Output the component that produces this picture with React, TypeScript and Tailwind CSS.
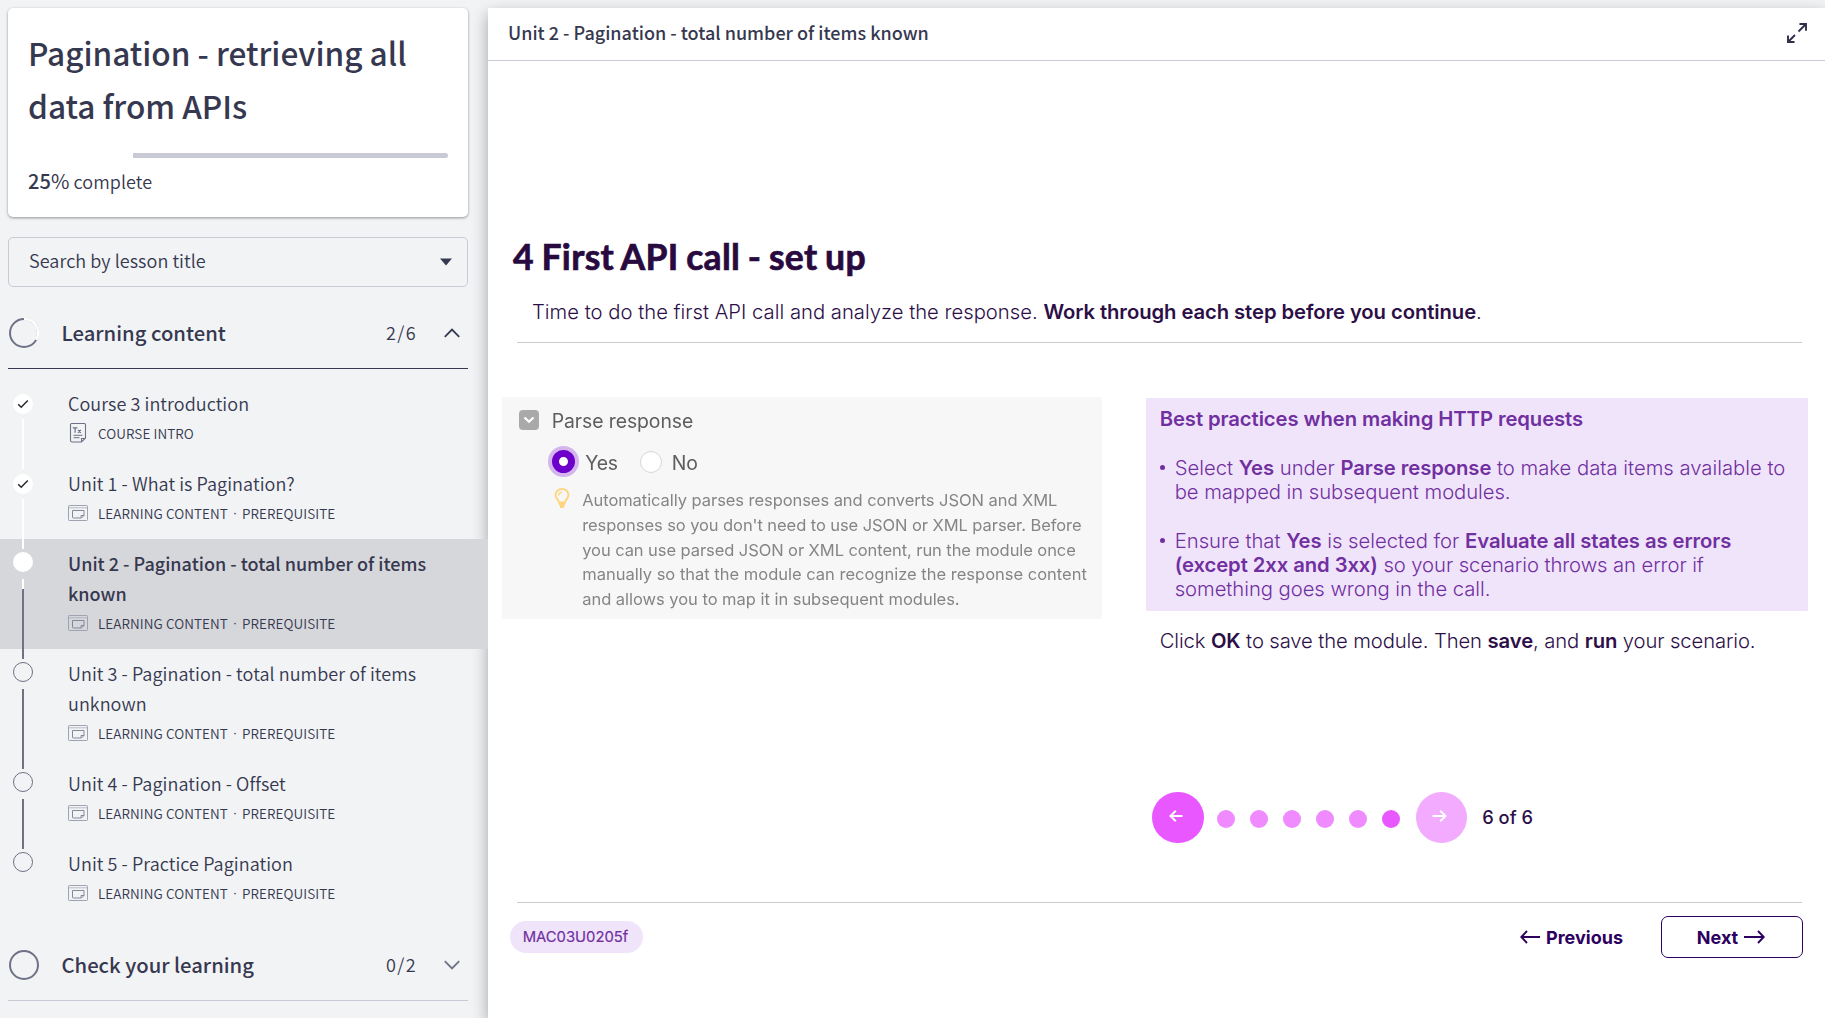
import React from 'react';

type Status = 'done' | 'current' | 'todo';

interface Lesson {
  title: string;
  kind: string;
  prerequisite: boolean;
  status: Status;
  last?: boolean;
}

const lessons: Lesson[] = [
  { title: 'Course 3 introduction', kind: 'COURSE INTRO', prerequisite: false, status: 'done' },
  { title: 'Unit 1 - What is Pagination?', kind: 'LEARNING CONTENT', prerequisite: true, status: 'done' },
  { title: 'Unit 2 - Pagination - total number of items known', kind: 'LEARNING CONTENT', prerequisite: true, status: 'current' },
  { title: 'Unit 3 - Pagination - total number of items unknown', kind: 'LEARNING CONTENT', prerequisite: true, status: 'todo' },
  { title: 'Unit 4 - Pagination - Offset', kind: 'LEARNING CONTENT', prerequisite: true, status: 'todo' },
  { title: 'Unit 5 - Practice Pagination', kind: 'LEARNING CONTENT', prerequisite: true, status: 'todo', last: true },
];

function TextIcon() {
  return (
    <svg width="20" height="22" viewBox="0 0 20 22" fill="none" stroke="#6f7186" strokeWidth="1.1">
      <path d="M3.500 1.500h13a1 1 0 0 1 1 1v13.500l-4 4H4a1.500 1.500 0 0 1-1.500-1.500V2.500a1 1 0 0 1 1-1z" />
      <path d="M13.500 20v-3.500h4" />
      <path d="M4.800 5.800h4.600M7.100 5.800v5M10 7.800l2.800 3M12.800 7.800l-2.800 3" strokeWidth="1.200" />
      <path d="M5.500 13.300h9M5.500 15.700h6" strokeWidth="1" />
    </svg>
  );
}

function SlideIcon() {
  return (
    <svg width="20" height="16" viewBox="0 0 20 16" fill="none" stroke="#a0a2b1" strokeWidth="1">
      <rect x="0.500" y="0.500" width="19" height="15" rx="0.800" />
      <path d="M0.500 2.800h19" strokeOpacity="0.700" />
      <path d="M4.500 5.500h11.500v5l-2.500 2.500h-8a1 1 0 0 1-1-1z" stroke="#85879a" />
      <path d="M13 12.800v-2.300h3" stroke="#85879a" />
    </svg>
  );
}

function StatusDot({ status }: { status: Status }) {
  if (status === 'done') {
    return (
      <div className="mt-[15px] flex size-5 items-center justify-center rounded-full bg-white">
        <svg width="12" height="10" viewBox="0 0 12 10" fill="none" stroke="#26262e" strokeWidth="1.500">
          <path d="M1.200 5.200l3 3L10.800 1.500" />
        </svg>
      </div>
    );
  }
  if (status === 'current') return <div className="mt-[13px] size-5 rounded-full bg-white" />;
  return <div className="mt-[13px] size-5 rounded-full border border-[#6f7186]" />;
}

function Connector({ status }: { status: Status }) {
  if (status === 'done') return <div className="absolute -bottom-[10px] left-[22px] top-10 z-10 w-0.5 bg-white" />;
  return (
    <div className="absolute -bottom-[10px] left-[22px] top-10 z-10 flex w-0.5 flex-col bg-[#6f7186]">
      {status === 'current' && <div className="h-[10px] bg-white" />}
    </div>
  );
}

function LessonRow({ lesson }: { lesson: Lesson }) {
  const current = lesson.status === 'current';
  return (
    <li className={current ? 'relative flex bg-[#d6d7db]' : 'relative flex'}>
      <div className="w-[68px] shrink-0 pl-[13px]">
        <StatusDot status={lesson.status} />
      </div>
      {!lesson.last && <Connector status={lesson.status} />}
      <div className="w-[380px] pb-[11px] pt-[9px]">
        <div className={current ? 'text-[18px] font-medium leading-[30px] text-[#363850]' : 'text-[18px] font-[350] tracking-[0.06px] leading-[30px] text-[#363850]'}>
          {lesson.title}
        </div>
        <div className="flex h-[30px] items-center text-[13.5px] font-[350] text-[#363850]">
          <span className="w-[30px]">{lesson.prerequisite ? <SlideIcon /> : <TextIcon />}</span>
          <span className="tracking-[0.08px]">{lesson.kind}</span>
          {lesson.prerequisite && (
            <>
              <span className="w-[14px] text-center font-['Liberation_Sans',sans-serif]">·</span>
              <span className="tracking-[0.08px]">PREREQUISITE</span>
            </>
          )}
        </div>
      </div>
    </li>
  );
}

function Sidebar() {
  return (
    <aside className="flex w-[488px] shrink-0 flex-col pt-2 font-['Noto_Sans_CJK_SC',sans-serif] text-[#363850]">
      <section className="mx-2 h-[209px] w-[460px] rounded-[5px] bg-white px-5 pt-[18px] shadow-[0_1px_3px_rgba(0,0,0,0.4)]">
        <h1 className="text-[31.6px] font-medium leading-[52.8px] tracking-[-0.02px]">
          Pagination - retrieving all
          <br />
          data from APIs
        </h1>
        <div className="mt-[21.400px] flex h-[5px] w-[420px] overflow-hidden rounded-full">
          <div className="w-1/4 bg-white" />
          <div className="grow bg-[#c8cad6]" />
        </div>
        <p className="mt-[8px] text-[18px] font-[350] leading-[30px] tracking-[0.06px]">
          <span className="text-[20px] font-medium">25</span>
          <span className="text-[20px] font-normal">%</span> complete
        </p>
      </section>

      <div className="mx-2 mt-5 flex h-[50px] w-[460px] items-center justify-between rounded-[5px] border border-[#c8cad6] pl-5 pr-[15px]">
        <span className="pb-[3px] text-[18px] font-[350] tracking-[0.06px]">Search by lesson title</span>
        <svg width="12" height="8" viewBox="0 0 12 8" fill="#363850">
          <path d="M0 0.500h12L6 7.500z" />
        </svg>
      </div>

      <div className="mx-2 mt-[11px] flex h-[71px] w-[460px] items-center border-b border-[#363850]">
        <svg className="ml-px" width="30" height="30" viewBox="0 0 30 30" fill="none" strokeWidth="2">
          <circle cx="15" cy="15" r="14" stroke="#6f7186" />
          <path d="M15 1a14 14 0 0 1 12.120 21" stroke="#fff" strokeWidth="2.400" />
        </svg>
        <h2 className="ml-[22.500px] grow text-[20.25px] font-medium">Learning content</h2>
        <span className="mr-[27px] pb-px text-[18px] font-[350] tracking-[1.400px]">2/6</span>
        <svg className="mr-[8px]" width="16" height="10" viewBox="0 0 16 10" fill="none" stroke="#363850" strokeWidth="1.800">
          <path d="M0.800 8.800L8 1.500l7.200 7.300" />
        </svg>
      </div>

      <ul className="mt-[10px]">
        {lessons.map((lesson) => (
          <LessonRow key={lesson.title} lesson={lesson} />
        ))}
      </ul>

      <div className="mx-2 mt-[11px] flex h-[71px] w-[460px] items-center border-b border-[#c8cad6]">
        <div className="ml-px size-[30px] rounded-full border-2 border-[#6f7186]" />
        <h2 className="ml-[22.500px] grow text-[20.25px] font-medium">Check your learning</h2>
        <span className="mr-[27px] pb-px text-[18px] font-[350] tracking-[1.400px]">0/2</span>
        <svg className="mr-[8px]" width="16" height="10" viewBox="0 0 16 10" fill="none" stroke="#6f7186" strokeWidth="1.800">
          <path d="M0.800 1.200L8 8.500l7.200-7.300" />
        </svg>
      </div>
    </aside>
  );
}

function ParseResponse() {
  return (
    <div className="h-[221.5px] w-[600px] bg-[#f7f7f7] pl-[17px] pt-[13px] text-[#5e5e5e]">
      <div className="flex flex-col blur-[0.5px]">
        <div className="flex h-5 items-center">
          <span className="flex size-5 items-center justify-center rounded-[4px] bg-[#a9a9a9]">
            <svg width="12" height="8" viewBox="0 0 12 8" fill="none" stroke="#fff" strokeWidth="2.200">
              <path d="M1.500 1.500L6 5.800l4.500-4.300" />
            </svg>
          </span>
          <span className="ml-[13px] pt-px text-[19.4px] leading-5 tracking-[-0.080px]">Parse response</span>
        </div>
        <div className="mt-[16px] flex h-[31px] items-center pl-[29px] text-[19.4px]">
          <span className="flex size-[31px] items-center justify-center rounded-full bg-[#d5b5ee]">
            <span className="size-[23px] rounded-full border-[7px] border-[#6e00cc] bg-white" />
          </span>
          <span className="ml-[6.500px] w-[54.500px] pt-[2px] leading-6 tracking-[-0.200px]">Yes</span>
          <span className="size-[22px] rounded-full border border-[#d6d6d6] bg-white" />
          <span className="ml-[10px] pt-[2px] leading-6">No</span>
        </div>
        <div className="mt-[11px] flex pl-[35px]">
          <svg width="16" height="21" viewBox="0 0 16 21" fill="none" stroke="#ffd580" strokeWidth="2">
            <path d="M5 14.500C5 11.800 1.500 10.800 1.500 7a6.500 6 0 0 1 13 0c0 3.800-3.500 4.800-3.500 7.500z" />
            <path d="M4.500 7.500C4.800 5.500 6 4.500 8 4.200" strokeWidth="1.400" />
            <path d="M5 16.200h6M6 18.800h4" strokeWidth="2.600" />
          </svg>
          <p className="ml-[12.500px] whitespace-nowrap text-[16.5px] leading-[24.67px] text-[#858585]">
            <span className="tracking-[-0.060px]">Automatically parses responses and converts JSON and XML</span>
            <br />
            <span className="tracking-[-0.075px]">responses so you don't need to use JSON or XML parser. Before</span>
            <br />
            <span className="tracking-[-0.075px]">you can use parsed JSON or XML content, run the module once</span>
            <br />
            manually so that the module can recognize the response content
            <br />
            <span className="tracking-[-0.030px]">and allows you to map it in subsequent modules.</span>
          </p>
        </div>
      </div>
    </div>
  );
}

function B({ children }: { children: React.ReactNode }) {
  return <strong className="font-semibold tracking-[-0.08px]">{children}</strong>;
}

function Bullet({ children }: { children: React.ReactNode }) {
  return (
    <li className="mt-[24.3px] flex">
      <span className="mt-[9px] size-[5px] shrink-0 rounded-full bg-[#7030a0]" />
      <span className="ml-[10px] whitespace-nowrap">{children}</span>
    </li>
  );
}

function BestPractices() {
  return (
    <div className="ml-[44px] w-[662px]">
      <div className="mt-px h-[212.500px] rounded-[1px] bg-[#f0e4fb] pl-[14px] pt-[9px] text-[20.25px] font-light leading-[24.3px] text-[#7030a0]">
        <B>Best practices when making HTTP requests</B>
        <ul>
          <Bullet>
            Select <B>Yes</B> under <B>Parse response</B> to make data items available to
            <br />
            <span className="tracking-[-0.050px]">be mapped in subsequent modules.</span>
          </Bullet>
          <Bullet>
            Ensure that <B>Yes</B> is selected for <B>Evaluate all states as errors</B>
            <br />
            <span className="tracking-[-0.080px]">
              <B>(except 2xx and 3xx)</B> so your scenario throws an error if
            </span>
            <br />
            <span className="tracking-[-0.050px]">something goes wrong in the call.</span>
          </Bullet>
        </ul>
      </div>
      <p className="mt-[18.500px] whitespace-nowrap pl-[14px] text-[20.25px] font-light leading-[24.3px] tracking-[-0.120px] text-[#2d0f48]">
        Click <B>OK</B> to save the module. Then <B>save</B>, and <B>run</B> your scenario.
      </p>
    </div>
  );
}

function Pager() {
  return (
    <div className="ml-[664px] mt-[172.500px] flex h-[51.500px] items-center">
      <button className="flex size-[51.500px] items-center justify-center rounded-full bg-[#e857ff]">
        <svg className="-ml-[3px] -mt-[2px]" width="14" height="12" viewBox="0 0 14 12" fill="none" stroke="#fff" strokeWidth="2">
          <path d="M13.500 6H1.800M6.800 0.800L1.500 6l5.300 5.200" />
        </svg>
      </button>
      <div className="ml-[13px] mt-[2.500px] flex gap-[15.150px]">
        <span className="size-[18px] rounded-full bg-[#ef8aff]" />
        <span className="size-[18px] rounded-full bg-[#ef8aff]" />
        <span className="size-[18px] rounded-full bg-[#ef8aff]" />
        <span className="size-[18px] rounded-full bg-[#ef8aff]" />
        <span className="size-[18px] rounded-full bg-[#ef8aff]" />
        <span className="size-[18px] rounded-full bg-[#e857ff]" />
      </div>
      <button className="ml-[15.500px] flex size-[51.500px] items-center justify-center rounded-full bg-[#f2abff]">
        <svg className="-ml-[3px] -mt-[2px]" width="15" height="12" viewBox="0 0 15 12" fill="none" stroke="#fff" strokeWidth="2">
          <path d="M0.500 6h12.700M8.200 0.800L13.500 6l-5.300 5.200" />
        </svg>
      </button>
      <span className="ml-[15px] text-[18.300px] font-medium leading-6 text-[#2d0f48]">6 of 6</span>
    </div>
  );
}

function Player() {
  return (
    <main className="mt-2 flex grow flex-col bg-white shadow-[0_6px_15px_rgba(0,0,0,0.33)]">
      <header className="flex h-[53px] items-center justify-between border-b border-[#c8cad6] pl-5 pr-[17px] font-['Noto_Sans_CJK_SC',sans-serif]">
        <span className="pb-[3px] text-[18px] font-medium text-[#363850]">Unit 2 - Pagination - total number of items known</span>
        <svg className="-mt-[2px]" width="22" height="22" viewBox="0 0 22 22" fill="none" stroke="#2f3048" strokeWidth="1.900">
          <path d="M12.500 9.500L20 2M13.500 2H20v6.800M9 13L2 20M2 13.500V20h6.500" />
        </svg>
      </header>

      <div className="flex grow flex-col font-['Inter',sans-serif]">
        <h2 className="ml-[25px] mt-[176px] font-['Lato',sans-serif] text-[35.5px] font-bold leading-10 tracking-[0.300px] text-[#280a3f] [-webkit-text-stroke:0.700px_#280a3f] [word-spacing:-1.300px]">
          4 First API call - set up
        </h2>
        <p className="ml-[44px] mt-[22.500px] whitespace-nowrap text-[20.25px] font-light leading-[24.3px] text-[#2d0f48]">
          Time to do the first API call and analyze the response. <B>Work through each step before you continue</B>.
        </p>
        <div className="ml-[28.500px] mt-[18px] h-[1.500px] w-[1285px] shrink-0 bg-[#cfc9c9]" />

        <div className="ml-[13.700px] mt-[54px] flex">
          <ParseResponse />
          <BestPractices />
        </div>
        <div className="-mt-[34.500px]">
          <Pager />
        </div>

        <div className="ml-[28.500px] mt-[58.500px] h-[1.500px] w-[1285px] shrink-0 bg-[#cfc9c9]" />
        <footer className="ml-[22px] mt-[13px] flex h-[42px] w-[1293px] items-center">
          <span className="flex h-8 w-[133px] items-center justify-center rounded-full bg-[#f0e4fb] pr-[2px] text-[14.800px] text-[#7030a0] [-webkit-text-stroke:0.200px_#7030a0]">
            MAC03U0205f
          </span>
          <button className="ml-auto flex items-center gap-[6.500px] text-[18px] font-bold text-[#2d0060]">
            <svg width="20" height="14" viewBox="0 0 20 14" fill="none" stroke="#2d0060" strokeWidth="1.900">
              <path d="M20 7H1.500M7 1L1.300 7l5.700 6" />
            </svg>
            Previous
          </button>
          <button className="ml-[38px] flex h-[42px] w-[142px] items-center justify-center gap-[6px] rounded-[7px] border-[1.500px] border-[#2d0060] pr-[2px] text-[18px] font-bold text-[#2d0060]">
            Next
            <svg width="21" height="14" viewBox="0 0 21 14" fill="none" stroke="#2d0060" strokeWidth="1.900">
              <path d="M0 7h19.500M14 1l5.700 6-5.700 6" />
            </svg>
          </button>
        </footer>
      </div>
    </main>
  );
}

export default function App() {
  return (
    <div className="flex h-[1018px] w-[1825px] overflow-hidden bg-[#f1f3f5]">
      <Sidebar />
      <Player />
    </div>
  );
}
